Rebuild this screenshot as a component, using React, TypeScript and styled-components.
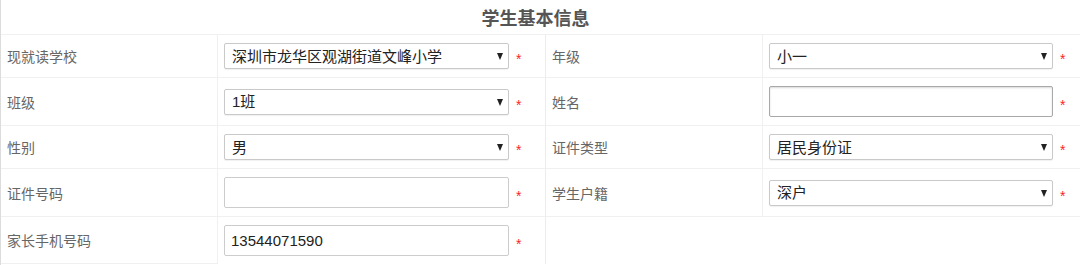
import styled, { createGlobalStyle } from "styled-components";

const GlobalStyle = createGlobalStyle`
    html, body {
        margin: 0;
        padding: 0;
        background: #fff;
    }
    body {
        font-family: "Liberation Sans", "Noto Sans CJK SC", sans-serif;
    }
`

const Page = styled.div`
    width: 1080px;
    height: 265px;
    box-sizing: border-box;
    border-left: 1px solid #dcdcdc;
    overflow: hidden;
`

const Title = styled.h2`
    margin: 0;
    height: 34px;
    display: flex;
    align-items: center;
    justify-content: center;
    padding-right: 10px;
    font-size: 18px;
    font-weight: bold;
    color: #555;
    border-bottom: 1px solid #f0f0f0;
`

const FormGrid = styled.div`
    display: grid;
    grid-template-columns: 217px 327px 218px 1fr;
`

const LabelCell = styled.div<{ $right?: boolean }>`
    display: flex;
    align-items: center;
    padding: 0 6px;
    font-size: 14px;
    color: #666;
    border-bottom: 1px solid #f0f0f0;
    border-right: 1px solid #f0f0f0;
    border-left: ${(p) => (p.$right ? "1px solid #ececec" : "none")};
    box-sizing: border-box;
`

const FieldCell = styled.div<{ $empty?: boolean }>`
    display: flex;
    align-items: center;
    gap: 7px;
    padding: 8px 6px;
    border-bottom: ${(p) => (p.$empty ? "none" : "1px solid #f0f0f0")};
`

const EmptyCell = styled.div`
    grid-column: span 2;
    border-left: 1px solid #ececec;
`

const SelectWrap = styled.div<{ $w: number }>`
    position: relative;
    width: ${(p) => p.$w}px;
    height: 26px;
`

const Select = styled.select`
    appearance: none;
    width: 100%;
    height: 100%;
    box-sizing: border-box;
    border: 1px solid #c9c9c9;
    border-radius: 2px;
    background: #fff;
    padding: 0 20px 0 7px;
    font-family: "Liberation Sans", "Noto Sans CJK SC", sans-serif;
    font-size: 15px;
    color: #222;
    box-shadow: 0 1px 1px rgba(0, 0, 0, 0.06);
    outline: none;
`

const Caret = styled.span`
    position: absolute;
    right: 6px;
    top: 10px;
    width: 0;
    height: 0;
    border-left: 3.5px solid transparent;
    border-right: 3.5px solid transparent;
    border-top: 7px solid #222;
    pointer-events: none;
`

const TextInput = styled.input<{ $w: number; $dark?: boolean }>`
    width: ${(p) => p.$w}px;
    height: 31px;
    box-sizing: border-box;
    border: 1px solid ${(p) => (p.$dark ? "#a9a9a9" : "#cccccc")};
    border-radius: 2px;
    padding: 0 6px;
    font-family: "Liberation Sans", "Noto Sans CJK SC", sans-serif;
    font-size: 15px;
    color: #222;
    box-shadow: ${(p) => (p.$dark ? "inset 0 1px 2px rgba(0,0,0,0.15)" : "none")};
    outline: none;
`

const Star = styled.span`
    color: #f22;
    font-size: 14px;
    line-height: 1;
    margin-top: 6px;
`

function SelectField({ value, width }: { value: string; width: number }) {
    return (
        <SelectWrap $w={width}>
            <Select defaultValue={value}>
                <option value={value}>{value}</option>
            </Select>
            <Caret />
        </SelectWrap>
    )
}

export default function App() {
    return (
        <>
            <GlobalStyle />
            <Page>
                <Title>学生基本信息</Title>
                <FormGrid>
                    <LabelCell>现就读学校</LabelCell>
                    <FieldCell>
                        <SelectField value="深圳市龙华区观湖街道文峰小学" width={285} />
                        <Star>*</Star>
                    </FieldCell>
                    <LabelCell $right>年级</LabelCell>
                    <FieldCell>
                        <SelectField value="小一" width={284} />
                        <Star>*</Star>
                    </FieldCell>

                    <LabelCell>班级</LabelCell>
                    <FieldCell>
                        <SelectField value="1班" width={285} />
                        <Star>*</Star>
                    </FieldCell>
                    <LabelCell $right>姓名</LabelCell>
                    <FieldCell>
                        <TextInput $w={284} $dark type="text" />
                        <Star>*</Star>
                    </FieldCell>

                    <LabelCell>性别</LabelCell>
                    <FieldCell>
                        <SelectField value="男" width={285} />
                        <Star>*</Star>
                    </FieldCell>
                    <LabelCell $right>证件类型</LabelCell>
                    <FieldCell>
                        <SelectField value="居民身份证" width={284} />
                        <Star>*</Star>
                    </FieldCell>

                    <LabelCell>证件号码</LabelCell>
                    <FieldCell>
                        <TextInput $w={285} type="text" />
                        <Star>*</Star>
                    </FieldCell>
                    <LabelCell $right>学生户籍</LabelCell>
                    <FieldCell>
                        <SelectField value="深户" width={284} />
                        <Star>*</Star>
                    </FieldCell>

                    <LabelCell>家长手机号码</LabelCell>
                    <FieldCell $empty>
                        <TextInput $w={285} type="text" defaultValue="13544071590" />
                        <Star>*</Star>
                    </FieldCell>
                    <EmptyCell />
                </FormGrid>
            </Page>
        </>
    )
}
